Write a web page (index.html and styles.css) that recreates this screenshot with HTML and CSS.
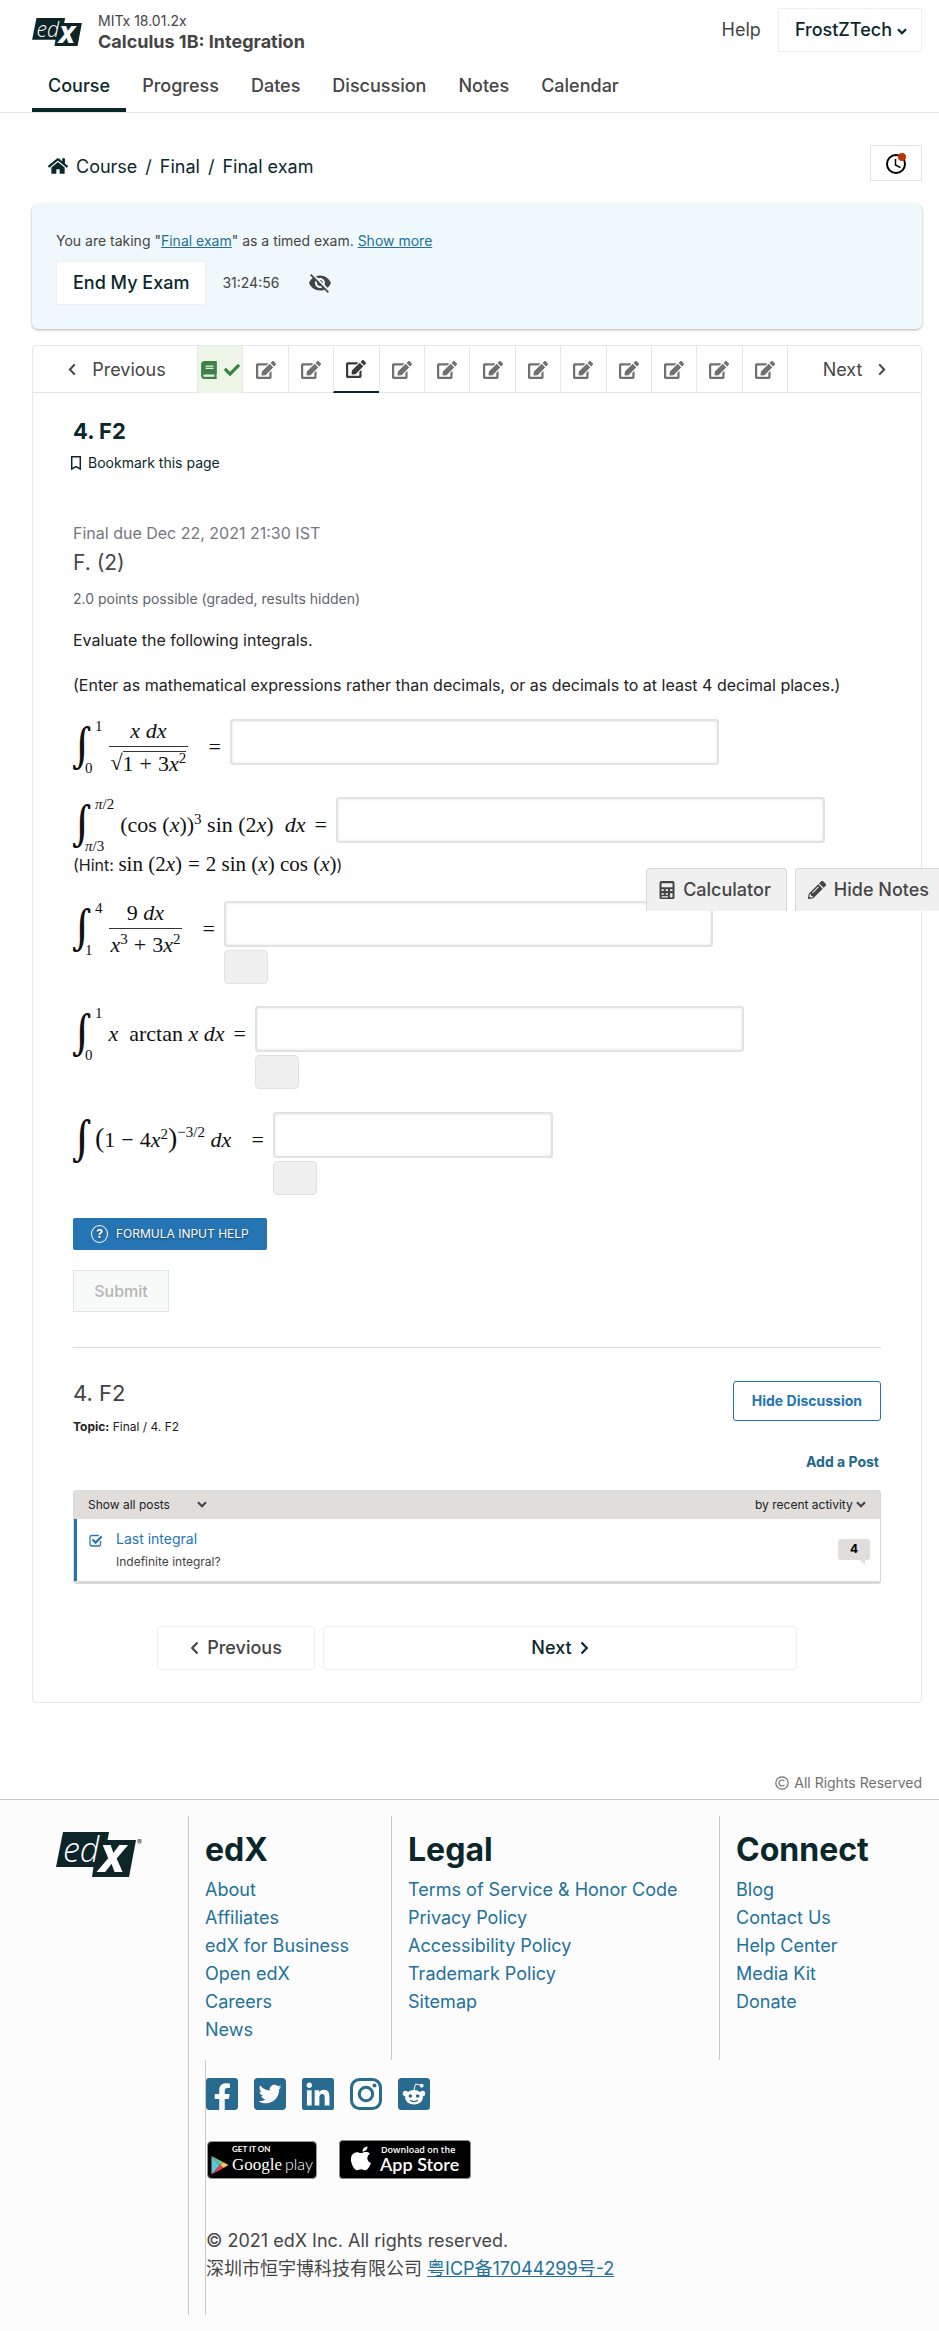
FILE: index.html
```html
<!DOCTYPE html>
<html lang="en">
<head>
<meta charset="utf-8">
<meta name="viewport" content="width=device-width, initial-scale=1">
<title>4. F2 | Calculus 1B: Integration | edX</title>
<link rel="stylesheet" href="styles.css">
</head>
<body>
<svg class="sprite" aria-hidden="true">
  <symbol id="edit" viewBox="0 0 576 512"><path d="M402.6 83.2l90.2 90.2c3.8 3.8 3.8 10 0 13.8L274.4 405.6l-92.8 10.3c-12.4 1.4-22.9-9.1-21.5-21.5l10.3-92.8L388.8 83.2c3.8-3.8 10-3.8 13.8 0zm162-22.9l-48.8-48.8c-15.2-15.2-39.9-15.2-55.2 0l-35.4 35.4c-3.8 3.8-3.8 10 0 13.8l90.2 90.2c3.8 3.8 10 3.8 13.8 0l35.4-35.4c15.2-15.3 15.2-40 0-55.2zM384 346.2V448H64V128h229.8c3.2 0 6.2-1.3 8.5-3.5l40-40c7.6-7.6 2.2-20.5-8.5-20.5H48C21.5 64 0 85.5 0 112v352c0 26.5 21.5 48 48 48h352c26.5 0 48-21.5 48-48V306.2c0-10.7-12.9-16-20.5-8.5l-40 40c-2.2 2.3-3.5 5.3-3.5 8.5z"/></symbol>
  <symbol id="chevron-left" viewBox="0 0 8 14"><path d="M7 1.5L1.7 7 7 12.500" fill="none" stroke="currentColor" stroke-width="2.200"/></symbol>
  <symbol id="chevron-right" viewBox="0 0 8 14"><path d="M1 1.500L6.300 7 1 12.500" fill="none" stroke="currentColor" stroke-width="2.200"/></symbol>
  <symbol id="chevron-down" viewBox="0 0 10 7"><path d="M1 1.200l4 4 4-4" fill="none" stroke="currentColor" stroke-width="2.200"/></symbol>
  <symbol id="edx" viewBox="0 0 80 45">
    <path d="M7 0H53L51.500 8H80L73 45H36L37.500 35H0z" fill="#0d2528"/>
    <text x="7" y="30" class="logo-ed">ed</text>
    <text x="43" y="40" class="logo-x">x</text>
  </symbol>
</svg>

<header class="site-header">
  <div class="site-bar">
    <a class="logo-link" href="#" aria-label="edX"><svg class="logo" viewBox="0 0 80 45"><use href="#edx"/></svg></a>
    <div class="course-name">
      <span class="course-org">MITx 18.01.2x</span>
      <span class="course-title">Calculus 1B: Integration</span>
    </div>
    <a class="help-link" href="#">Help</a>
    <button class="btn user-menu" type="button">FrostZTech <svg class="caret" viewBox="0 0 10 7"><use href="#chevron-down"/></svg></button>
  </div>
  <nav class="tabs" aria-label="Course">
    <a class="tab tab-active" href="#">Course</a>
    <a class="tab" href="#">Progress</a>
    <a class="tab" href="#">Dates</a>
    <a class="tab" href="#">Discussion</a>
    <a class="tab" href="#">Notes</a>
    <a class="tab" href="#">Calendar</a>
  </nav>
</header>

<main class="page">
  <div class="crumb-row">
    <nav class="crumbs" aria-label="Breadcrumb">
      <svg class="home" viewBox="0 0 576 512"><path d="M280.37 148.26L96 300.11V464a16 16 0 0 0 16 16l112.06-.29a16 16 0 0 0 15.92-16V368a16 16 0 0 1 16-16h64a16 16 0 0 1 16 16v95.64a16 16 0 0 0 16 16.05L464 480a16 16 0 0 0 16-16V300L295.67 148.26a12.19 12.19 0 0 0-15.3 0zM571.6 251.47L488 182.56V44.05a12 12 0 0 0-12-12h-56a12 12 0 0 0-12 12v72.61L318.47 43a48 48 0 0 0-61 0L4.34 251.47a12 12 0 0 0-1.600 16.900l25.500 31A12 12 0 0 0 45.150 301l235.220-193.740a12.190 12.190 0 0 1 15.300 0L530.900 301a12 12 0 0 0 16.900-1.600l25.500-31a12 12 0 0 0-1.700-16.930z"/></svg>
      <a href="#">Course</a><span>/</span><a href="#">Final</a><span>/</span><a href="#">Final exam</a>
    </nav>
    <button class="clock-btn" type="button" aria-label="Notifications">
      <svg viewBox="0 0 22 22"><circle cx="11" cy="12" r="9" fill="none" stroke="#000" stroke-width="2"/><path d="M10.500 7v6l5 2.600" fill="none" stroke="#000" stroke-width="1.500"/><circle cx="17" cy="5" r="4" fill="#b93400"/></svg>
    </button>
  </div>

  <section class="exam-alert">
    <p class="exam-text">You are taking "<a href="#">Final exam</a>" as a timed exam. <a href="#">Show more</a></p>
    <div class="exam-actions">
      <button class="btn" type="button">End My Exam</button>
      <span class="exam-time">31:24:56</span>
      <button class="eye-btn" type="button" aria-label="Hide timer"><svg viewBox="0 0 24 24"><path d="M12 7c2.760 0 5 2.240 5 5 0 .65-.13 1.260-.36 1.830l2.920 2.920c1.510-1.260 2.700-2.890 3.430-4.750-1.730-4.390-6-7.500-11-7.500-1.400 0-2.740.25-3.980.7l2.160 2.160C10.740 7.130 11.350 7 12 7zM2 4.270l2.280 2.280.46.46C3.080 8.300 1.780 10.020 1 12c1.730 4.390 6 7.500 11 7.500 1.550 0 3.030-.3 4.380-.84l.42.42L19.730 22 21 20.730 3.270 3 2 4.270zM7.530 9.800l1.550 1.550c-.05.21-.08.43-.08.65 0 1.660 1.340 3 3 3 .22 0 .44-.03.65-.08l1.550 1.550c-.67.33-1.410.53-2.200.53-2.760 0-5-2.240-5-5 0-.79.2-1.530.53-2.200zm4.310-.78l3.150 3.150.02-.16c0-1.660-1.340-3-3-3l-.17.01z"/></svg></button>
    </div>
  </section>

  <section class="sequence">
    <nav class="seq-nav" aria-label="Sequence">
      <button class="seq-side seq-prev" type="button"><svg class="chev" viewBox="0 0 8 14"><use href="#chevron-left"/></svg>Previous</button>
      <div class="seq-tabs">
        <button class="seq-tab seq-done" type="button" aria-label="Complete reading">
          <svg class="book" viewBox="0 0 448 512"><path d="M448 360V24c0-13.300-10.700-24-24-24H96C43 0 0 43 0 96v320c0 53 43 96 96 96h328c13.300 0 24-10.700 24-24v-16c0-7.500-3.500-14.300-8.900-18.700-4.200-15.400-4.200-59.300 0-74.700 5.400-4.300 8.900-11.100 8.900-18.600zM128 134c0-3.300 2.700-6 6-6h212c3.300 0 6 2.700 6 6v20c0 3.300-2.700 6-6 6H134c-3.300 0-6-2.700-6-6v-20zm0 64c0-3.300 2.700-6 6-6h212c3.300 0 6 2.700 6 6v20c0 3.300-2.700 6-6 6H134c-3.300 0-6-2.700-6-6v-20zm253.400 250H96c-17.700 0-32-14.300-32-32 0-17.600 14.400-32 32-32h285.400c-1.900 17.100-1.900 46.900 0 64z"/></svg>
          <svg class="check" viewBox="0 0 512 512"><path d="M173.898 439.404l-166.400-166.400c-9.997-9.997-9.997-26.206 0-36.204l36.203-36.204c9.997-9.998 26.207-9.998 36.204 0L192 312.690 432.095 72.596c9.997-9.997 26.207-9.997 36.204 0l36.203 36.204c9.997 9.997 9.997 26.206 0 36.204l-294.400 294.401c-9.998 9.997-26.207 9.997-36.204-.001z"/></svg>
        </button>
        <button class="seq-tab" type="button" aria-label="Problem 2"><svg class="edit" viewBox="0 0 576 512"><use href="#edit"/></svg></button>
        <button class="seq-tab" type="button" aria-label="Problem 3"><svg class="edit" viewBox="0 0 576 512"><use href="#edit"/></svg></button>
        <button class="seq-tab seq-active" type="button" aria-label="Problem 4"><svg class="edit" viewBox="0 0 576 512"><use href="#edit"/></svg></button>
        <button class="seq-tab" type="button" aria-label="Problem 5"><svg class="edit" viewBox="0 0 576 512"><use href="#edit"/></svg></button>
        <button class="seq-tab" type="button" aria-label="Problem 6"><svg class="edit" viewBox="0 0 576 512"><use href="#edit"/></svg></button>
        <button class="seq-tab" type="button" aria-label="Problem 7"><svg class="edit" viewBox="0 0 576 512"><use href="#edit"/></svg></button>
        <button class="seq-tab" type="button" aria-label="Problem 8"><svg class="edit" viewBox="0 0 576 512"><use href="#edit"/></svg></button>
        <button class="seq-tab" type="button" aria-label="Problem 9"><svg class="edit" viewBox="0 0 576 512"><use href="#edit"/></svg></button>
        <button class="seq-tab" type="button" aria-label="Problem 10"><svg class="edit" viewBox="0 0 576 512"><use href="#edit"/></svg></button>
        <button class="seq-tab" type="button" aria-label="Problem 11"><svg class="edit" viewBox="0 0 576 512"><use href="#edit"/></svg></button>
        <button class="seq-tab" type="button" aria-label="Problem 12"><svg class="edit" viewBox="0 0 576 512"><use href="#edit"/></svg></button>
        <button class="seq-tab" type="button" aria-label="Problem 13"><svg class="edit" viewBox="0 0 576 512"><use href="#edit"/></svg></button>
      </div>
      <button class="seq-side" type="button">Next<svg class="chev" viewBox="0 0 8 14"><use href="#chevron-right"/></svg></button>
    </nav>

    <div class="unit">
      <h1 class="unit-title">4. F2</h1>
      <button class="bookmark" type="button"><svg viewBox="0 0 12 16"><path d="M1.700 1.700h8.600v12.300L6 11.700l-4.300 2.300z" fill="none" stroke="currentColor" stroke-width="1.500"/></svg>Bookmark this page</button>

      <p class="due">Final due Dec 22, 2021 21:30 IST</p>
      <h2 class="sub-title">F. (2)</h2>
      <p class="points">2.0 points possible (graded, results hidden)</p>
      <p class="evaluate">Evaluate the following integrals.</p>
      <p class="enter">(Enter as mathematical expressions rather than decimals, or as decimals to at least 4 decimal places.)</p>

      <div class="eq-row">
        <label class="math math-1" for="a1">
          <span class="int">∫</span><span class="limits"><span>1</span><span class="low">0</span></span>
          <span class="frac"><span class="num"><i>x</i> <i>dx</i></span><span class="den"><span class="root">√</span><span class="radicand">1<span class="op">+</span>3<i>x</i><sup>2</sup></span></span></span>
          <span class="eq">=</span>
        </label>
        <div class="answer"><input id="a1" type="text"></div>
      </div>
      <div class="eq-row eq-row-2">
        <label class="math math-2" for="a2">
          <span class="int">∫</span><span class="limits"><span><i>π</i>/2</span><span class="low"><i>π</i>/3</span></span>
          <span>(cos (<i>x</i>))<sup>3</sup> sin (2<i>x</i>)&nbsp; <i>dx</i></span>
          <span class="eq">=</span>
        </label>
        <div class="answer"><input id="a2" type="text"></div>
      </div>
      <p class="hint">(Hint: <span class="hint-math">sin (2<i>x</i>)<span class="op">=</span>2 sin (<i>x</i>) cos (<i>x</i>)</span>)</p>
      <div class="eq-row">
        <label class="math math-3" for="a3">
          <span class="int">∫</span><span class="limits"><span>4</span><span class="low">1</span></span>
          <span class="frac"><span class="num">9 <i>dx</i></span><span class="den"><span><i>x</i><sup>3</sup><span class="op">+</span>3<i>x</i><sup>2</sup></span></span></span>
          <span class="eq">=</span>
        </label>
        <div class="answer"><input id="a3" type="text"><span class="preview"></span></div>
      </div>
      <div class="eq-row eq-row-4">
        <label class="math math-4" for="a4">
          <span class="int">∫</span><span class="limits"><span>1</span><span class="low">0</span></span>
          <span><i>x</i>&nbsp; arctan <i>x</i> <i>dx</i></span>
          <span class="eq">=</span>
        </label>
        <div class="answer"><input id="a4" type="text"><span class="preview"></span></div>
      </div>
      <div class="eq-row eq-row-5">
        <label class="math math-5" for="a5">
          <span class="int">∫</span>
          <span class="body-5"><span class="paren">(</span>1<span class="op">−</span>4<i>x</i><sup>2</sup><span class="paren">)</span><sup class="tall">−3/2</sup> <i>dx</i></span>
          <span class="eq">=</span>
        </label>
        <div class="answer answer-short"><input id="a5" type="text"><span class="preview"></span></div>
      </div>

      <button class="formula-btn" type="button"><span class="q">?</span>FORMULA INPUT HELP</button>
      <button class="submit-btn" type="button" disabled>Submit</button>

      <section class="discussion">
        <div class="disc-head">
          <div>
            <h3 class="disc-title">4. F2</h3>
            <p class="topic"><b>Topic:</b> Final / 4. F2</p>
          </div>
          <button class="hide-disc" type="button">Hide Discussion</button>
        </div>
        <a class="add-post" href="#">Add a Post</a>
        <div class="threads">
          <div class="thread-bar">
            <span class="pick pick-posts"><select aria-label="Filter posts"><option>Show all posts</option></select><svg viewBox="0 0 10 7"><use href="#chevron-down"/></svg></span>
            <span class="pick pick-sort"><select aria-label="Sort posts"><option>by recent activity</option></select><svg viewBox="0 0 10 7"><use href="#chevron-down"/></svg></span>
          </div>
          <div class="thread">
            <svg class="thread-check" viewBox="0 0 14 13"><path d="M11.500 7v3.200a1.800 1.800 0 0 1-1.800 1.800H2.800A1.800 1.800 0 0 1 1 10.200V3.300a1.800 1.800 0 0 1 1.800-1.800h7" fill="none" stroke="currentColor" stroke-width="1.300"/><path d="M3.500 5.500L6.600 8.500 12.600 2.500" fill="none" stroke="currentColor" stroke-width="2.400"/></svg>
            <div class="thread-text"><a href="#">Last integral</a><p>Indefinite integral?</p></div>
            <span class="count">4</span>
          </div>
        </div>
      </section>

      <div class="unit-nav">
        <button class="unit-btn" type="button"><svg class="chev-bold" viewBox="0 0 8 14"><use href="#chevron-left"/></svg>Previous</button>
        <button class="unit-btn unit-next" type="button">Next<svg class="chev-bold" viewBox="0 0 8 14"><use href="#chevron-right"/></svg></button>
      </div>
    </div>
  </section>

  <p class="rights"><svg viewBox="0 0 14 14"><circle cx="7" cy="7" r="6.200"/><path d="M9.400 5.200a3 3 0 1 0 0 3.600"/></svg>All Rights Reserved</p>
</main>

<aside class="tools">
  <button class="tool" type="button"><svg viewBox="0 0 16 18"><path fill-rule="evenodd" d="M2 0h12a2 2 0 0 1 1.500 2v14.500a1.500 1.500 0 0 1-1.500 1.500H2a1.500 1.500 0 0 1-1.500-1.500V2A2 2 0 0 1 2 0zM2.500 2.200v4h11v-4zM2.500 8.300v1.800h2.300V8.300zM6.700 8.300v1.800H9V8.300zM11 8.300v1.800h2.500V8.300zM2.500 12.300v1.500h2.300v-1.500zM6.700 12.300v1.500H9v-1.500zM11 12.300v4h2.500v-4zM2.500 15.200v1.300H9v-1.300z"/></svg>Calculator</button>
  <button class="tool" type="button"><svg viewBox="0 0 512 512"><path d="M497.900 142.100l-46.100 46.100c-4.700 4.700-12.300 4.700-17 0l-111-111c-4.700-4.700-4.700-12.300 0-17l46.100-46.100c18.700-18.700 49.100-18.700 67.900 0l60.100 60.100c18.800 18.700 18.800 49.100 0 67.900zM284.200 99.800L21.600 362.400.4 483.900c-2.900 16.400 11.400 30.600 27.800 27.800l121.500-21.300 262.600-262.600c4.700-4.700 4.700-12.300 0-17l-111-111c-4.800-4.700-12.400-4.700-17.100 0zM124.100 339.900c-5.500-5.500-5.500-14.300 0-19.800l154-154c5.500-5.500 14.300-5.500 19.800 0s5.500 14.300 0 19.800l-154 154c-5.500 5.500-14.300 5.500-19.800 0zM88 424h48v36.300l-64.500 11.300-31.100-31.100L51.700 376H88v48z"/></svg>Hide Notes</button>
</aside>

<footer class="footer">
  <div class="footer-logo"><svg viewBox="0 0 87 45"><use href="#edx" width="80" height="45"/><text x="81" y="13" class="reg">®</text></svg></div>
  <div class="footer-main">
    <div class="footer-cols">
      <section class="footer-col">
        <h2>edX</h2>
        <ul><li><a href="#">About</a></li><li><a href="#">Affiliates</a></li><li><a href="#">edX for Business</a></li><li><a href="#">Open edX</a></li><li><a href="#">Careers</a></li><li><a href="#">News</a></li></ul>
      </section>
      <section class="footer-col">
        <h2>Legal</h2>
        <ul><li><a href="#">Terms of Service &amp; Honor Code</a></li><li><a href="#">Privacy Policy</a></li><li><a href="#">Accessibility Policy</a></li><li><a href="#">Trademark Policy</a></li><li><a href="#">Sitemap</a></li></ul>
      </section>
      <section class="footer-col">
        <h2>Connect</h2>
        <ul><li><a href="#">Blog</a></li><li><a href="#">Contact Us</a></li><li><a href="#">Help Center</a></li><li><a href="#">Media Kit</a></li><li><a href="#">Donate</a></li></ul>
      </section>
    </div>
    <div class="footer-extra">
      <div class="social">
        <a href="#" aria-label="Facebook"><svg viewBox="0 32 448 448"><path d="M400 32H48A48 48 0 0 0 0 80v352a48 48 0 0 0 48 48h137.250V327.690h-63V256h63v-54.640c0-62.150 37-96.480 93.670-96.480 27.140 0 55.520 4.840 55.520 4.840v61h-31.270c-30.810 0-40.420 19.120-40.420 38.730V256h68.780l-11 71.690h-57.780V480H400a48 48 0 0 0 48-48V80a48 48 0 0 0-48-48z"/></svg></a>
        <a href="#" aria-label="Twitter"><svg viewBox="0 32 448 448"><path d="M400 32H48C21.500 32 0 53.500 0 80v352c0 26.500 21.500 48 48 48h352c26.500 0 48-21.500 48-48V80c0-26.500-21.500-48-48-48zm-48.900 158.800c.2 2.800.2 5.700.2 8.500 0 86.700-66 186.600-186.600 186.600-37.200 0-71.700-10.800-100.700-29.400 5.300.6 10.400.8 15.800.8 30.700 0 58.900-10.400 81.400-28-28.800-.6-53-19.500-61.300-45.500 10.100 1.500 19.200 1.500 29.600-1.200-30-6.100-52.500-32.500-52.500-64.400v-.8c8.700 4.900 18.900 7.900 29.600 8.300a65.447 65.447 0 0 1-29.200-54.600c0-12.200 3.200-23.400 8.900-33.100 32.300 39.800 80.800 65.800 135.200 68.600-9.300-44.500 24-80.600 64-80.600 18.900 0 35.900 7.900 47.900 20.700 14.800-2.800 29-8.300 41.600-15.800-4.900 15.200-15.200 28-28.800 36.100 13.200-1.400 26-5.100 37.800-10.200-8.900 13.100-20.100 24.700-32.900 34z"/></svg></a>
        <a href="#" aria-label="LinkedIn"><svg viewBox="0 32 448 448"><path d="M416 32H31.900C14.300 32 0 46.500 0 64.300v383.400C0 465.500 14.300 480 31.900 480H416c17.600 0 32-14.500 32-32.300V64.300c0-17.800-14.400-32.300-32-32.300zM135.400 416H69V202.200h66.500V416zm-33.200-243c-21.300 0-38.500-17.300-38.500-38.500S80.900 96 102.200 96c21.200 0 38.500 17.300 38.500 38.500 0 21.300-17.200 38.500-38.500 38.500zm282.100 243h-66.400V312c0-24.800-.5-56.700-34.500-56.700-34.600 0-39.900 27-39.900 54.900V416h-66.400V202.200h63.700v29.200h.9c8.900-16.800 30.600-34.500 62.900-34.500 67.200 0 79.700 44.300 79.700 101.900V416z"/></svg></a>
        <a href="#" aria-label="Instagram"><svg viewBox="0 0 32 32"><rect x="1.500" y="1.500" width="29" height="29" rx="8" fill="none" stroke="currentColor" stroke-width="3"/><circle cx="16" cy="16" r="6.700" fill="none" stroke="currentColor" stroke-width="3"/><circle cx="24.500" cy="7.600" r="2"/></svg></a>
        <a href="#" aria-label="Reddit"><svg viewBox="0 0 32 32"><rect width="32" height="32" rx="3.500"/><g fill="#fff"><ellipse cx="16" cy="19.300" rx="9" ry="7.300"/><circle cx="7.400" cy="15.400" r="2.600"/><circle cx="24.600" cy="15.400" r="2.600"/><circle cx="23.700" cy="7.700" r="1.900"/></g><path d="M16 12l1.500-6 5.300 1.300" fill="none" stroke="#fff" stroke-width="1"/><circle cx="12.300" cy="18" r="1.800"/><circle cx="19.700" cy="18" r="1.800"/><path d="M12.200 22.300c2 1.700 5.600 1.700 7.600 0" fill="none" stroke="currentColor" stroke-width="1.200"/></svg></a>
      </div>
      <div class="stores">
        <a href="#" aria-label="Google Play"><svg class="play" viewBox="0 0 110 38"><rect x=".5" y=".5" width="109" height="37" rx="4" fill="#000" stroke="#999"/><path d="M4.500 15v18.500L13 24z" fill="#5cc5d8"/><path d="M4.500 15L16.500 21.300 13 24z" fill="#74c58b"/><path d="M16.500 21.300L21.500 24 16.500 27 13 24z" fill="#f5c35b"/><path d="M4.500 33.500L13 24l3.500 3z" fill="#e4405a"/><text x="25" y="11" class="get-it">GET IT ON</text><text x="25" y="29" class="google">Google</text><text x="78" y="29" class="play-word">play</text></svg></a>
        <a href="#" aria-label="App Store"><svg class="apple" viewBox="0 0 132 39"><rect x=".5" y=".5" width="131" height="38" rx="3" fill="#000" stroke="#888"/><path d="M28.500 6.500c.2 2.600-2.200 5.200-4.900 5-.3-2.500 2.200-4.900 4.900-5zM30.900 13.700c-3.800 2.300-3.300 7.500 1 9.300-1 3.200-3.300 7-5.500 7.200-1.600.1-2.300-1-4.200-1s-2.700 1-4.200 1c-3.300-.2-8.300-10.200-4.900-15.300 1.600-2.300 4.300-3.100 6.400-2.400 2 .8 2.700.8 4.800 0 2.100-.7 4.800-.6 6.600 1.200z" fill="#fff"/><text x="42" y="13" class="download">Download on the</text><text x="41" y="31" class="app-store">App Store</text></svg></a>
      </div>
      <p class="legal">© 2021 edX Inc. All rights reserved.<br>深圳市恒宇博科技有限公司 <a href="#">粤ICP备17044299号-2</a></p>
    </div>
  </div>
</footer>
</body>
</html>
```
FILE: styles.css
```css
* { box-sizing: border-box; }
body {
  position: relative;
  margin: 0;
  background: #fff;
  color: #454545;
  font: 18px/28px Inter, "Noto Sans CJK SC", sans-serif;
}
h1, h2, h3, p, ul { margin: 0; padding: 0; }
ul { list-style: none; }
a { color: inherit; text-decoration: none; }
button { font: inherit; color: inherit; background: none; border: 0; padding: 0; }
svg { display: block; flex: none; overflow: visible; fill: currentColor; }
symbol { overflow: visible; }
.sprite { position: absolute; width: 0; height: 0; }

.logo-ed { font: italic 300 34px "Open Sans", sans-serif; fill: #fff; }
.logo-x { font: italic 700 50px "Open Sans", sans-serif; fill: #fff; }
.reg { font: 7px Inter, sans-serif; fill: #0d2528; }

.site-header { padding: 8px 17px 0 32px; border-bottom: 1px solid #e7e7e7; }
.site-bar { display: flex; align-items: center; height: 44px; }
.logo { width: 50px; height: 28px; margin-top: 4px; }
.course-name { display: flex; flex-direction: column; flex: 1; margin-left: 16px; padding-top: 4px; }
.course-org { font-size: 14px; line-height: 20px; }
.course-title { font-weight: 700; line-height: 22px; }
.help-link { margin-right: 17px; }
.btn {
  height: 44px;
  padding: 0 16px;
  border: 1px solid #f2f0ef;
  background: #fff;
  color: #0a282c;
  font-weight: 500;
}
.user-menu { display: flex; align-items: center; gap: 5px; padding-right: 14px; }
.caret { width: 10px; height: 7px; margin-top: 3px; }
.tabs { display: flex; margin-top: 8px; }
.tab { padding: 12px 16px 8px; border-bottom: 4px solid transparent; font-weight: 500; }
.tab-active { border-color: #0a282c; color: #0a282c; }

.page { padding: 32px 17px 0 32px; }
.crumb-row { display: flex; align-items: flex-end; justify-content: space-between; }
.crumbs { display: flex; gap: 8px; padding-left: 16px; color: #0a282c; }
.home { width: 20px; height: 18px; margin-top: 4px; }
.clock-btn { display: grid; place-items: center; width: 52px; height: 36px; border: 1px solid #e7e4e4; }
.clock-btn svg { width: 22px; height: 22px; }

.exam-alert {
  margin-top: 23px;
  padding: 24px;
  border-radius: 6px;
  background: #eff8fa;
  box-shadow: 0 1px 3px rgba(0, 0, 0, .3);
  font-size: 14px;
  line-height: 26px;
}
.exam-text a, .legal a { color: #23719b; text-decoration: underline; }
.exam-actions { display: flex; align-items: center; margin-top: 7px; }
.exam-actions .btn { font-size: 18px; }
.exam-time { margin: 0 29px 0 16px; }
.eye-btn svg { width: 24px; height: 24px; }

.sequence { margin-top: 16px; border: 1px solid #e7e7e7; border-radius: 4px; }
.seq-nav { display: grid; grid-template-columns: 164px 1fr 133px; height: 47px; border-bottom: 1px solid #e7e4e4; }
.seq-side { display: flex; align-items: center; justify-content: center; gap: 16px; }
.seq-prev { padding-left: 4px; }
.chev { width: 8px; height: 13px; }
.seq-tabs { display: flex; border-right: 1px solid #e7e7e7; }
.seq-tab { display: flex; flex: 1; align-items: center; justify-content: center; height: 47px; border-left: 1px solid #e7e7e7; color: #707070; }
.seq-done { gap: 7px; background: #edf6e6; color: #3c814a; }
.seq-active { border-bottom: 2px solid #0a282c; color: #3a3a3a; }
.edit { width: 20px; height: 18px; }
.book { width: 16px; height: 18px; }
.check { width: 16px; height: 16px; }

.unit { padding: 23px 40px 32px; }
.unit-title { color: #0a282c; font-size: 22px; line-height: 30px; font-weight: 700; }
.bookmark { display: flex; align-items: center; gap: 6px; margin: 7px 0 0 -3px; color: #0a282c; font-size: 14px; line-height: 20px; }
.bookmark svg { width: 12px; height: 16px; }
.due { margin-top: 48px; color: #76767f; font-size: 16px; line-height: 24px; }
.sub-title { margin-top: 3px; color: #474747; font-size: 21px; line-height: 30px; font-weight: 400; }
.points { margin-top: 11px; color: #5e6670; font-size: 14px; line-height: 20px; }
.evaluate, .enter { margin-top: 18px; color: #222; font-size: 16px; line-height: 26px; }
.enter { margin: 19px 0 21px; }

.eq-row { display: flex; align-items: flex-start; }
.eq-row-2 { margin-top: 32px; }
.eq-row-4 { margin-top: 22px; }
.eq-row-5 { margin-top: 23px; }
.math {
  display: flex;
  flex: none;
  align-items: center;
  height: 46px;
  padding-top: 10px;
  color: #111;
  font: 22px/24px "Liberation Serif", serif;
  white-space: nowrap;
}
.math sup { font-size: 15px; line-height: 0; }
.math .tall { vertical-align: 10px; }
.math .paren { font-size: 28px; line-height: 0; }
.math-1 { width: 157px; }
.math-2 { width: 263px; }
.math-3 { width: 151px; }
.math-4 { width: 182px; }
.math-5 { width: 200px; }
.int { width: 19px; margin-left: -3px; font: 40px/46px "DejaVu Math TeX Gyre", "Liberation Serif", serif; }
.limits { display: flex; flex-direction: column; justify-content: space-between; height: 58px; margin: 0 6px; font-size: 15px; line-height: 16px; }
.low { margin-left: -10px; }
.op { margin: 0 6px; }
.body-5 { padding-left: 6px; }
.frac { display: flex; flex-direction: column; }
.num { padding-bottom: 3px; border-bottom: 1px solid #333; text-align: center; }
.den { display: flex; justify-content: center; padding: 4px 2px 0; }
.radicand { border-top: 1px solid #333; }
.eq { margin-left: auto; padding-right: 9px; }
.answer { width: 489px; }
.answer-short { width: 280px; }
.answer input {
  display: block;
  width: 100%;
  height: 46px;
  border: 2px solid #e2e2e2;
  border-radius: 3px;
  background: #fff;
  box-shadow: inset 0 0 3px #e2e2e2;
}
.preview { display: block; width: 44px; height: 34px; margin-top: 3px; border: 1px solid #e2e2e2; border-radius: 4px; background: #f0f0f0; }
.hint { margin: 9px 0 23px; color: #222; font-size: 16px; line-height: 26px; }
.hint-math { color: #111; font: 21px/20px "Liberation Serif", serif; }

.formula-btn {
  display: flex;
  align-items: center;
  gap: 8px;
  height: 32px;
  margin-top: 23px;
  padding: 0 18px;
  border-radius: 2px;
  background: #2574b4;
  color: #fff;
  font-size: 12px;
  text-shadow: 0 1px 2px rgba(0, 0, 0, .5);
}
.q { width: 17px; height: 18px; border: 1px solid #fff; border-radius: 50%; font-weight: 700; line-height: 16px; text-align: center; }
.submit-btn { width: 96px; height: 42px; margin-top: 20px; border: 1px solid #e2e5e5; background: #f8faf9; color: #b4b5b5; font-size: 16px; font-weight: 500; }

.discussion { margin-top: 35px; padding-top: 30px; border-top: 1px solid #d9d9d9; }
.disc-head { display: flex; justify-content: space-between; }
.disc-title { color: #414141; font-size: 22px; line-height: 30px; font-weight: 400; }
.topic { margin-top: 9px; color: #222; font-size: 12px; line-height: 20px; }
.hide-disc { height: 40px; margin-top: 3px; padding: 0 18px; border: 1px solid #2574b4; border-radius: 3px; color: #2574b4; font-size: 14px; font-weight: 700; }
.add-post { display: block; margin: 15px 2px 18px; color: #23668d; font-size: 14px; line-height: 20px; font-weight: 700; text-align: right; }
.threads { border: 1px solid #d9d9d9; border-bottom-width: 3px; border-radius: 3px; background: #fff; }
.thread-bar { display: flex; justify-content: space-between; height: 28px; padding: 0 14px; background: #e0dddb; }
.pick { position: relative; display: block; line-height: 26px; }
.pick select { display: block; width: 100%; height: 27px; padding: 0; border: 0; background: none; color: #222; font: 12px Inter, sans-serif; appearance: none; }
.pick svg { position: absolute; top: 10px; right: 0; width: 10px; height: 7px; pointer-events: none; }
.pick-posts { width: 119px; }
.pick-sort { width: 111px; }
.thread { display: flex; align-items: flex-start; height: 62px; padding: 10px 10px 0 12px; border-left: 3px solid #2574b4; }
.thread-check { width: 14px; height: 13px; margin-top: 5px; color: #2574b4; }
.thread-text { flex: 1; margin-left: 13px; font-size: 12px; line-height: 22px; }
.thread-text a { color: #2574b4; font-size: 14px; line-height: 20px; }
.count { position: relative; width: 32px; height: 21px; margin-top: 10px; border-radius: 3px; background: #e0dddb; color: #000; font-size: 12px; font-weight: 700; line-height: 20px; text-align: center; }
.count::after { content: ""; position: absolute; top: 21px; right: 5px; border-top: 5px solid #e0dddb; border-left: 5px solid transparent; }

.unit-nav { display: grid; grid-template-columns: 1fr 3fr; gap: 8px; margin: 42px 84px 0; }
.unit-btn { display: flex; align-items: center; justify-content: center; gap: 8px; height: 44px; border: 1px solid #eee; border-radius: 4px; font-weight: 500; }
.unit-next { color: #0a282c; }
.chev-bold { width: 9px; height: 14px; }
.rights { display: flex; align-items: center; justify-content: flex-end; gap: 5px; margin: 70px 0 6px; color: #707070; font-size: 14px; line-height: 20px; }
.rights svg { width: 14px; height: 14px; fill: none; stroke: currentColor; stroke-width: 1.2; }

.tools { position: absolute; top: 868px; right: 0; display: flex; gap: 8px; }
.tool { display: flex; align-items: center; gap: 8px; height: 43px; padding: 0 15px 0 12px; border: 1px solid #d9d9d9; border-bottom: 0; border-radius: 4px 4px 0 0; background: #f0f0f0; font-weight: 500; }
.tool:last-child { padding-right: 10px; border-right: 0; border-radius: 4px 0 0; }
.tool svg { width: 16px; height: 18px; }
.tool:last-child svg { width: 18px; }

.footer { display: flex; padding: 16px 17px 16px 32px; border-top: 1px solid #c8c8c8; background: #fcfcfc; }
.footer-logo { width: 156px; padding: 16px 24px; }
.footer-logo svg { width: 87px; height: 45px; }
.footer-main { flex: 1; padding-left: 16px; border-left: 1px solid #c8c8c8; }
.footer-cols { display: flex; height: 244px; }
.footer-col { padding: 14px 16px 0; border-left: 1px solid #c8c8c8; }
.footer-col:first-child { width: 186px; padding-left: 0; border: 0; }
.footer-col:nth-child(2) { width: 328px; }
.footer-col:last-child { flex: 1; }
.footer-col h2 { margin-bottom: 6px; color: #0a282c; font-size: 32px; line-height: 40px; font-weight: 700; }
.footer-col a { color: #23719b; }
.footer-extra { height: 255px; padding-top: 18px; border-left: 1px solid #c8c8c8; }
.social { display: flex; gap: 16px; color: #296a8f; }
.social svg { width: 32px; height: 32px; }
.stores { display: flex; align-items: center; gap: 22px; margin: 30px 0 48px 1px; }
.stores text { fill: #fff; }
.play { width: 110px; height: 38px; }
.apple { width: 132px; height: 39px; }
.get-it { font: 700 8px Lato, sans-serif; }
.google { font: 17px "Liberation Serif", serif; }
.play-word { font: 300 16px Lato, sans-serif; }
.download { font: 600 9px "Open Sans", sans-serif; }
.app-store { font: 600 18px Lato, sans-serif; }
.legal { color: #454545; }
```
